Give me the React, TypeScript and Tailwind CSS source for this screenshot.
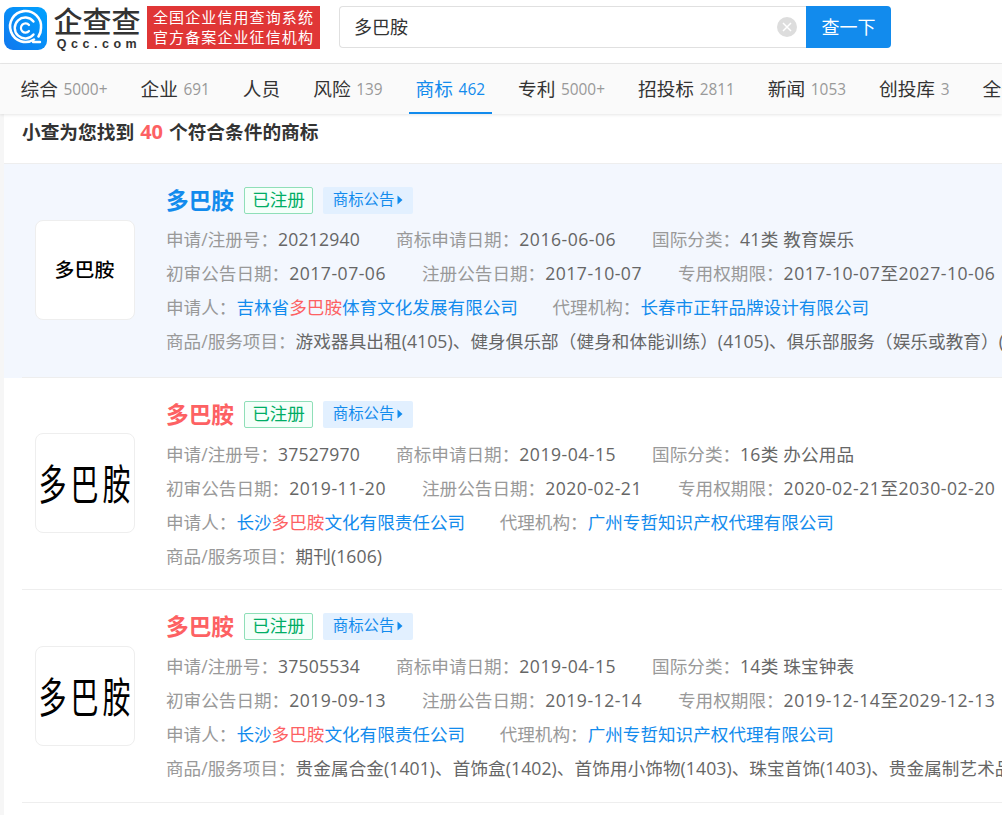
const font = "[font-family:'Open_Sans','Noto_Sans_CJK_SC',sans-serif]";

const tabs = [
  { name: "综合", count: "5000+" },
  { name: "企业", count: "691" },
  { name: "人员", count: "" },
  { name: "风险", count: "139" },
  { name: "商标", count: "462", active: true },
  { name: "专利", count: "5000+" },
  { name: "招投标", count: "2811" },
  { name: "新闻", count: "1053" },
  { name: "创投库", count: "3" },
  { name: "全部", count: "" },
];

const rows = [
  {
    hot: true,
    no: "20212940",
    applied: "2016-06-06",
    kind: "41类 教育娱乐",
    first: "2017-07-06",
    reg: "2017-10-07",
    term: "2017-10-07至2027-10-06",
    pre: "吉林省",
    post: "体育文化发展有限公司",
    agent: "长春市正轩品牌设计有限公司",
    goods: "游戏器具出租(4105)、健身俱乐部（健身和体能训练）(4105)、俱乐部服务（娱乐或教育）(4105)、教育",
    logo: 1,
    className: "h-[214px] pt-[20px]",
    logoClass: "mt-[36px]",
    firstLine: "mt-[4px]",
  },
  {
    no: "37527970",
    applied: "2019-04-15",
    kind: "16类 办公用品",
    first: "2019-11-20",
    reg: "2020-02-21",
    term: "2020-02-21至2030-02-20",
    pre: "长沙",
    post: "文化有限责任公司",
    agent: "广州专哲知识产权代理有限公司",
    goods: "期刊(1606)",
    logo: 2,
    className: "h-[212px] pt-[20px]",
    logoClass: "mt-[35px]",
    firstLine: "mt-[5px]",
  },
  {
    no: "37505534",
    applied: "2019-04-15",
    kind: "14类 珠宝钟表",
    first: "2019-09-13",
    reg: "2019-12-14",
    term: "2019-12-14至2029-12-13",
    pre: "长沙",
    post: "文化有限责任公司",
    agent: "广州专哲知识产权代理有限公司",
    goods: "贵金属合金(1401)、首饰盒(1402)、首饰用小饰物(1403)、珠宝首饰(1403)、贵金属制艺术品(1403)",
    logo: 2,
    className: "h-[213px] pt-[20px]",
    logoClass: "mt-[36px]",
    firstLine: "mt-[5px]",
  },
];

function QccIcon() {
  return (
    <svg width="43" height="43" viewBox="0 0 43 43" className="shrink-0">
      <defs>
        <linearGradient id="qcc" x1="0" y1="1" x2="1" y2="0">
          <stop offset="0" stopColor="#1177ee" />
          <stop offset="1" stopColor="#00a2ff" />
        </linearGradient>
      </defs>
      <rect width="43" height="43" rx="9" fill="url(#qcc)" />
      <path d="M30 32.5 A15.5 15.5 0 1 1 37 21 a15 15 0 0 1 -2.5 8.5" fill="none" stroke="#fff" strokeWidth="2.6" strokeLinecap="round" />
      <path d="M29.5 14.5 A10.5 10.5 0 1 0 29.5 27.5" fill="none" stroke="#fff" strokeWidth="2.4" strokeLinecap="round" />
      <path d="M25 18 A4.6 4.6 0 1 0 25 24" fill="none" stroke="#fff" strokeWidth="2.2" strokeLinecap="round" />
      <path d="M29 35 L36 35" stroke="#fff" strokeWidth="2.4" strokeLinecap="round" />
    </svg>
  );
}

function Label({ children }: { children: React.ReactNode }) {
  return <span className="text-[#999]">{children}</span>;
}

function Field({ label, value, className }: { label: string; value: string; className: string }) {
  return (
    <span className="shrink-0">
      <Label>{label}：</Label>
      <span className={`text-[#666] ${className}`}>{value}</span>
    </span>
  );
}

function Row({ row }: { row: (typeof rows)[number] }) {
  return (
    <div className={`relative flex pl-[31px] ${row.hot ? "bg-[#f3f7fe]" : "bg-white"} ${row.className}`}>
      <div className={`flex h-[100px] w-[100px] shrink-0 items-center justify-center overflow-hidden whitespace-nowrap rounded-lg border border-[#eee] bg-white text-black ${row.logoClass}`}>
        {row.logo === 1 ? (
          <span className="mt-[1px] scale-x-105 text-[19px] font-medium leading-none">多巴胺</span>
        ) : (
          <span className="scale-y-[1.5] pl-[3px] text-[28px] leading-none tracking-[4px]">多巴胺</span>
        )}
      </div>
      <div className="ml-[31px] min-w-0 flex-1 overflow-hidden whitespace-nowrap text-[17.6px]">
        <div className="flex h-[34px] items-center">
          <span className={`text-[22.7px] font-bold ${row.hot ? "text-[#128bed]" : "text-[#fd6163]"}`}>多巴胺</span>
          <span className="mb-[2px] ml-[10px] flex h-[27px] w-[69px] items-center justify-center rounded-[2px] border border-[#8fdfb8] bg-[#f5fffa] pb-[1px] text-[17.6px] text-[#00ad65]">已注册</span>
          <span className="mb-[2px] ml-[10px] flex h-[27px] w-[90px] items-center justify-center rounded-[2px] bg-[#e2f0ff] text-[15.4px] text-[#128bed]">
            商标公告
            <svg width="6" height="10" viewBox="0 0 6 10" className="ml-[3px]">
              <path d="M0.5 0.5 L5.5 5 L0.5 9.5 Z" fill="#128bed" />
            </svg>
          </span>
        </div>
        <div className={`flex h-[34px] items-center gap-[36px] ${row.firstLine}`}>
          <Field label="申请/注册号" value={row.no} className="tracking-[0.2px]" />
          <Field label="商标申请日期" value={row.applied} className="tracking-[0.5px]" />
          <Field label="国际分类" value={row.kind} className="tracking-[0.2px]" />
        </div>
        <div className="flex h-[34px] items-center gap-[36px]">
          <Field label="初审公告日期" value={row.first} className="tracking-[0.5px]" />
          <Field label="注册公告日期" value={row.reg} className="tracking-[0.5px]" />
          <Field label="专用权期限" value={row.term} className="tracking-[0.5px]" />
        </div>
        <div className="flex h-[34px] items-center gap-[34.5px]">
          <span className="shrink-0">
            <Label>申请人：</Label>
            <span className="text-[#128bed]">
              {row.pre}
              <span className="text-[#fd6163]">多巴胺</span>
              {row.post}
            </span>
          </span>
          <span className="shrink-0">
            <Label>代理机构：</Label>
            <span className="text-[#128bed]">{row.agent}</span>
          </span>
        </div>
        <div className="flex h-[34px] items-center">
          <Label>商品/服务项目：</Label>
          <span className="tracking-[0.08px] text-[#666]">{row.goods}</span>
        </div>
      </div>
      <div className="absolute bottom-0 left-[18px] right-0 h-px bg-[#eee]" />
    </div>
  );
}

export default function App() {
  return (
    <div className={`h-[815px] w-[1002px] overflow-hidden bg-white ${font}`}>
      <header className="flex h-[64px] items-start border-b border-[#e8e8e8] bg-white pl-[4px] pt-[6px]">
        <div className="mt-[1px]">
          <QccIcon />
        </div>
        <div className="ml-[7px] flex w-[86px] shrink-0 flex-col items-center whitespace-nowrap text-[#333]">
          <span className="mt-[2px] h-[28px] text-[29px] font-medium leading-[28px]">企查查</span>
          <span className="mt-[1px] pl-[4px] text-[12.5px] font-bold leading-[14px] tracking-[4.5px] [font-family:'Liberation_Sans',sans-serif]">Qcc.com</span>
        </div>
        <div className="ml-[7px] flex h-[43px] w-[173px] shrink-0 flex-col items-center justify-center whitespace-nowrap bg-[#e03636] pb-[2px] text-[15px] leading-[20px] tracking-[1.1px] text-white">
          <span>全国企业信用查询系统</span>
          <span>官方备案企业征信机构</span>
        </div>
        <div className="ml-[19px] flex h-[42px] w-[467px] items-center justify-between rounded-l-[4px] border border-r-0 border-[#e0e0e0] pl-[14px] pr-[9px] text-[18px] text-[#333]">
          <span>多巴胺</span>
          <span className="flex h-[20px] w-[20px] items-center justify-center rounded-full bg-[#ddd]">
            <svg width="10" height="10" viewBox="0 0 10 10">
              <path d="M1 1 L9 9 M9 1 L1 9" stroke="#fff" strokeWidth="1.5" />
            </svg>
          </span>
        </div>
        <button className="flex h-[42px] w-[85px] items-center justify-center rounded-r-[4px] bg-[#128bed] text-[18px] text-white">查一下</button>
      </header>
      <nav className="relative z-10 flex h-[50px] items-stretch gap-[19px] overflow-hidden whitespace-nowrap bg-[#fafafa] pl-[13.5px] shadow-[0_1px_3px_rgba(0,0,0,0.1)]">
        {tabs.map((tab) => (
          <div
            key={tab.name}
            className={`flex shrink-0 items-center border-b-2 px-[7px] pt-[3px] text-[18.7px] ${tab.active ? "border-[#128bed] text-[#128bed]" : "border-transparent text-[#333]"}`}
          >
            {tab.name}
            {tab.count && <span className={`ml-[5.6px] text-[15.4px] ${tab.active ? "text-[#128bed]" : "text-[#999]"}`}>{tab.count}</span>}
          </div>
        ))}
      </nav>
      <div className="bg-[#f6f6f6] pl-[4px]">
        <div className="bg-white">
          <div className="flex h-[50px] items-center border-b border-[#eee] pb-[13px] pl-[18px] text-[18.7px] font-bold text-[#333]">
            小查为您找到<span className="mx-[6px] text-[20px] text-[#fd6163]">40</span>个符合条件的商标
          </div>
          {rows.map((row) => (
            <Row key={row.no} row={row} />
          ))}
          <div className="h-[20px]" />
        </div>
      </div>
    </div>
  );
}
